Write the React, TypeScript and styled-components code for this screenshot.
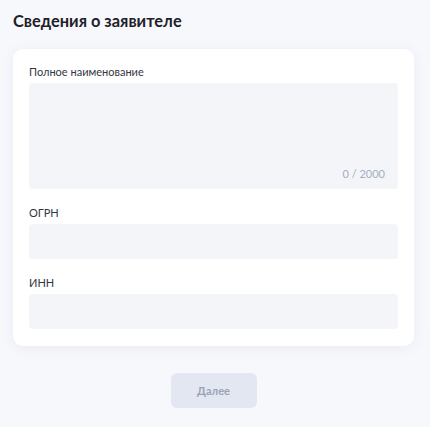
import React from "react";
import styled, { createGlobalStyle } from "styled-components";

const Global = createGlobalStyle`
  html, body { margin: 0; padding: 0; background: #f7f8fc; }
  body { font-family: Lato, "Noto Sans", sans-serif; }
  * { box-sizing: border-box; }
`;

const Page = styled.div`
  width: 430px;
  height: 427px;
  padding: 10px 16px 0 13px;
  display: flex;
  flex-direction: column;
`;

const Title = styled.h1`
  margin: 0;
  font-family: Lato, "Noto Sans", sans-serif;
  font-weight: 700;
  font-size: 16.4px;
  line-height: 22px;
  color: #1e2129;
`;

const Card = styled.div`
  margin-top: 17px;
  background: #ffffff;
  border-radius: 10px;
  box-shadow: 0 2px 14px rgba(50, 70, 140, 0.07);
  padding: 15px 16px 17px;
  display: flex;
  flex-direction: column;
  gap: 16px;
`;

const Field = styled.div`
  display: flex;
  flex-direction: column;
  gap: 3px;
`;

const Label = styled.label`
  font-family: Lato, "Noto Sans", sans-serif;
  font-size: 11px;
  line-height: 16px;
  color: #33363f;
`;

const InputBox = styled.div<{ $tall?: boolean }>`
  position: relative;
  height: ${(p) => (p.$tall ? "106px" : "35px")};
  background: #f4f5f9;
  border-radius: 4px;
`;

const Counter = styled.span`
  position: absolute;
  right: 13px;
  bottom: 8px;
  font-family: Lato, "Noto Sans", sans-serif;
  font-size: 11px;
  line-height: 14px;
  color: #a3adc4;
`;

const Footer = styled.div`
  display: flex;
  justify-content: center;
  margin-top: 27px;
`;

const Button = styled.button`
  width: 86px;
  height: 35px;
  border: none;
  border-radius: 6px;
  background: #e3e7f1;
  color: #9aa3b6;
  font-family: Lato, "Noto Sans", sans-serif;
  font-size: 11px;
  font-weight: 700;
  cursor: default;
`;

export default function App() {
  return (
    <>
      <Global />
      <Page>
        <Title>Сведения о заявителе</Title>
        <Card>
          <Field>
            <Label>Полное наименование</Label>
            <InputBox $tall>
              <Counter>0 / 2000</Counter>
            </InputBox>
          </Field>
          <Field>
            <Label>ОГРН</Label>
            <InputBox />
          </Field>
          <Field>
            <Label>ИНН</Label>
            <InputBox />
          </Field>
        </Card>
        <Footer>
          <Button disabled>Далее</Button>
        </Footer>
      </Page>
    </>
  );
}
